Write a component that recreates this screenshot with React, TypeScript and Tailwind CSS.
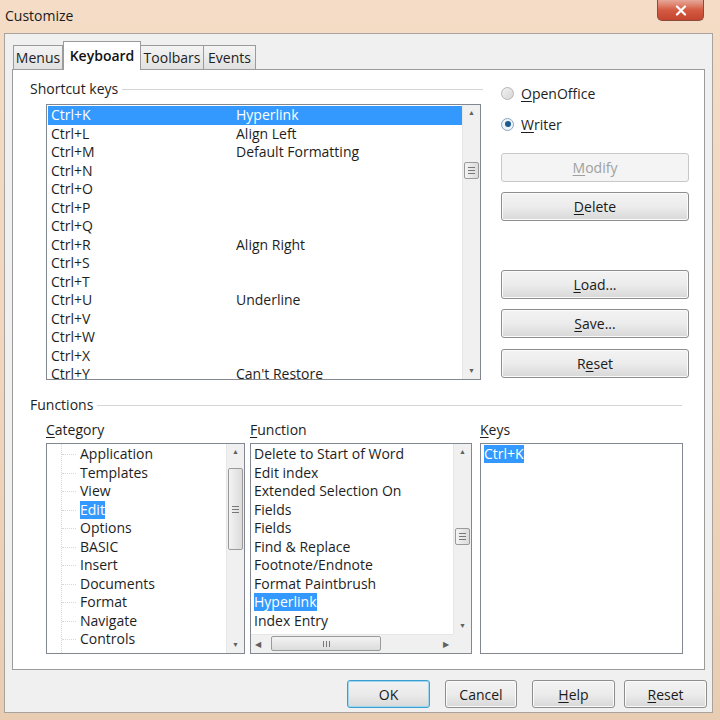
import React from "react";

const font = { fontFamily: '"Open Sans", "Noto Sans", sans-serif' };

function U({ children }: { children: React.ReactNode }) {
  return <span className="underline underline-offset-2">{children}</span>;
}

function Btn({ children, disabled, w = "w-[188px]", h = "h-[29px]", def }: { children: React.ReactNode; disabled?: boolean; w?: string; h?: string; def?: boolean }) {
  return (
    <div
      className={`${w} ${h} shrink-0 flex items-center justify-center rounded-[3px] border text-[14px] ${
        disabled
          ? "border-[#c8c8c8] bg-[#f4f4f4] text-[#a0a0a0]"
          : def
          ? "border-[#3c9fcf] bg-gradient-to-b from-[#f2f2f2] via-[#ebebeb] to-[#d9d9d9] text-[#1a1a1a] shadow-[inset_0_0_0_1px_#9fd6f0]"
          : "border-[#8e8e8e] bg-gradient-to-b from-[#f3f3f3] via-[#ececec] to-[#d8d8d8] text-[#1a1a1a] shadow-[inset_0_0_0_1px_#fbfbfb]"
      }`}
    >
      {children}
    </div>
  );
}

function VScroll({ thumbTop, thumbH }: { thumbTop: number; thumbH: number }) {
  return (
    <div className="relative w-[18px] h-full bg-[#f0f0f0] border-l border-[#e6e6e6]">
      <div className="absolute top-[3px] left-0 w-full flex justify-center text-[7px] text-[#606060]">▲</div>
      <div className="absolute bottom-[3px] left-0 w-full flex justify-center text-[7px] text-[#606060]">▼</div>
      <div
        className="absolute left-[1px] w-[15px] rounded-[2px] border border-[#9a9a9a] bg-gradient-to-r from-[#f3f3f3] to-[#dcdcdc] flex flex-col items-center justify-center gap-[2px]"
        style={{ top: thumbTop, height: thumbH }}
      >
        <div className="w-[7px] h-[1px] bg-[#777]" />
        <div className="w-[7px] h-[1px] bg-[#777]" />
        <div className="w-[7px] h-[1px] bg-[#777]" />
      </div>
    </div>
  );
}

const shortcuts: [string, string][] = [
  ["Ctrl+K", "Hyperlink"],
  ["Ctrl+L", "Align Left"],
  ["Ctrl+M", "Default Formatting"],
  ["Ctrl+N", ""],
  ["Ctrl+O", ""],
  ["Ctrl+P", ""],
  ["Ctrl+Q", ""],
  ["Ctrl+R", "Align Right"],
  ["Ctrl+S", ""],
  ["Ctrl+T", ""],
  ["Ctrl+U", "Underline"],
  ["Ctrl+V", ""],
  ["Ctrl+W", ""],
  ["Ctrl+X", ""],
  ["Ctrl+Y", "Can't Restore"],
];

const categories = ["Application", "Templates", "View", "Edit", "Options", "BASIC", "Insert", "Documents", "Format", "Navigate", "Controls"];
const functions = [
  "Delete to Start of Word",
  "Edit index",
  "Extended Selection On",
  "Fields",
  "Fields",
  "Find & Replace",
  "Footnote/Endnote",
  "Format Paintbrush",
  "Hyperlink",
  "Index Entry",
];

function GroupLabel({ text }: { text: string }) {
  return (
    <div className="flex items-center gap-[4px] h-[18px]">
      <span className="text-[14px] text-[#1e1e1e] whitespace-nowrap">{text}</span>
      <div className="flex-1 h-[1px] bg-[#d5d5d5] mt-[2px]" />
    </div>
  );
}

export default function App() {
  return (
    <div
      className="w-[720px] h-[720px] flex flex-col bg-gradient-to-b from-[#f4dcc6] via-[#f0d6bd] to-[#e9cdb2] overflow-hidden"
      style={font}
    >
      {/* title bar */}
      <div className="relative h-[33px] shrink-0">
        <div className="absolute left-[5px] top-[5px] text-[14px] text-[#1a1a1a]">Customize</div>
        <div className="absolute left-[657px] top-0 w-[47px] h-[21px] rounded-b-[5px] border border-t-0 border-[#8a4a3c] bg-gradient-to-b from-[#e6a898] via-[#d45a42] to-[#c4452e] flex items-center justify-center">
          <svg width="12" height="11" viewBox="0 0 12 11">
            <path d="M2 1.5 L10 9.5 M10 1.5 L2 9.5" stroke="#fff" strokeWidth="2.2" strokeLinecap="round" />
          </svg>
        </div>
      </div>

      {/* client */}
      <div className="ml-[4px] mr-[7px] mb-[7px] flex-1 border border-[#a8a39c] bg-[#f0f0f0] flex flex-col pl-[7px] pr-[7px]">
        {/* tabs */}
        <div className="h-[35px] flex items-end pl-[1px] shrink-0">
          <div className="w-[50px] h-[24px] border border-b-0 border-[#9b9b9b] bg-gradient-to-b from-[#f4f4f4] to-[#e1e1e1] flex items-center justify-center text-[14px] text-[#222]">
            Menus
          </div>
          <div className="relative z-10 -mb-[1px] w-[78px] h-[29px] border border-b-0 border-[#9b9b9b] bg-white flex items-start pt-[3px] justify-center text-[14px] font-semibold text-[#111]">
            Keyboard
          </div>
          <div className="w-[63px] h-[24px] border border-b-0 border-l-0 border-[#9b9b9b] bg-gradient-to-b from-[#f4f4f4] to-[#e1e1e1] flex items-center justify-center text-[14px] text-[#222]">
            Toolbars
          </div>
          <div className="w-[52px] h-[24px] border border-b-0 border-l-0 border-[#9b9b9b] bg-gradient-to-b from-[#f4f4f4] to-[#e1e1e1] flex items-center justify-center text-[14px] text-[#222]">
            Events
          </div>
        </div>

        {/* panel */}
        <div className="h-[601px] shrink-0 border border-[#9b9b9b] bg-white pl-[17px] pr-[13px] pt-[9px] flex flex-col">
          {/* top section */}
          <div className="flex">
            <div className="w-[453px] flex flex-col">
              <GroupLabel text="Shortcut keys" />
              <div className="ml-[16px] mt-[7px] w-[435px] h-[276px] border border-[#828790] flex">
                <div className="flex-1 flex flex-col pl-[1px] pt-[1px] overflow-hidden">
                  {shortcuts.map(([k, f], i) => (
                    <div
                      key={k}
                      className={`h-[18.5px] shrink-0 flex items-center text-[14px] leading-[18px] ${
                        i === 0 ? "bg-[#3399ff] text-white" : "text-[#1e1e1e]"
                      }`}
                    >
                      <span className="w-[188px] pl-[3px]">{k}</span>
                      <span>{f}</span>
                    </div>
                  ))}
                </div>
                <VScroll thumbTop={57} thumbH={17} />
              </div>
            </div>
            <div className="ml-[18px] w-[188px] flex flex-col">
              <div className="h-[18px] flex items-center gap-[7px] mt-[5px]">
                <div className="w-[13px] h-[13px] rounded-full border border-[#b5b5b5] bg-gradient-to-br from-[#f2f2f2] to-[#d6d6d6]" />
                <span className="text-[14px] text-[#1e1e1e]">
                  <U>O</U>penOffice
                </span>
              </div>
              <div className="h-[18px] flex items-center gap-[7px] mt-[13px]">
                <div className="w-[13px] h-[13px] rounded-full border border-[#8ca5bd] bg-[#eef4f9] flex items-center justify-center">
                  <div className="w-[6px] h-[6px] rounded-full bg-[#1d5a8e]" />
                </div>
                <span className="text-[14px] text-[#1e1e1e]">
                  <U>W</U>riter
                </span>
              </div>
              <div className="mt-[20px]">
                <Btn disabled>
                  <U>M</U>odify
                </Btn>
              </div>
              <div className="mt-[10px]">
                <Btn>
                  <U>D</U>elete
                </Btn>
              </div>
              <div className="mt-[49px]">
                <Btn>
                  <U>L</U>oad...
                </Btn>
              </div>
              <div className="mt-[10px]">
                <Btn>
                  <U>S</U>ave...
                </Btn>
              </div>
              <div className="mt-[11px]">
                <Btn>
                  R<U>e</U>set
                </Btn>
              </div>
            </div>
          </div>

          {/* functions */}
          <div className="mt-[15px] mr-[9px]">
            <GroupLabel text="Functions" />
          </div>
          <div className="flex mt-[7px] ml-[16px]">
            {/* category */}
            <div className="w-[199px] flex flex-col">
              <div className="h-[18px] text-[14px] text-[#1e1e1e] flex items-center">
                <span>
                  <U>C</U>ategory
                </span>
              </div>
              <div className="mt-[5px] h-[211px] border border-[#828790] flex">
                <div className="relative flex-1 flex flex-col pt-[1px] overflow-hidden">
                  <div className="absolute left-[14px] top-0 bottom-0 border-l border-dotted border-[#d8d8d8]" />
                  {categories.map((c, i) => (
                    <div key={c} className="relative h-[18.5px] shrink-0 flex items-center text-[14px] leading-[18px]">
                      <div className="absolute left-[15px] w-[14px] top-[9px] border-t border-dotted border-[#d8d8d8]" />
                      <span className={`ml-[33px] ${i === 3 ? "bg-[#3399ff] text-white" : "text-[#1e1e1e]"}`}>{c}</span>
                    </div>
                  ))}
                </div>
                <VScroll thumbTop={24} thumbH={82} />
              </div>
            </div>
            {/* function */}
            <div className="ml-[5px] w-[222px] flex flex-col">
              <div className="h-[18px] text-[14px] text-[#1e1e1e] flex items-center">
                <span>
                  <U>F</U>unction
                </span>
              </div>
              <div className="mt-[5px] h-[211px] border border-[#828790] flex flex-col">
                <div className="flex flex-1 min-h-0">
                  <div className="flex-1 flex flex-col pt-[1px] pl-[3px] overflow-hidden">
                    {functions.map((f, i) => (
                      <div key={i} className="h-[18.5px] shrink-0 flex items-center text-[14px] leading-[18px]">
                        <span className={i === 8 ? "bg-[#3399ff] text-white" : "text-[#1e1e1e]"}>{f}</span>
                      </div>
                    ))}
                  </div>
                  <VScroll thumbTop={84} thumbH={17} />
                </div>
                <div className="h-[19px] flex shrink-0">
                  <div className="relative flex-1 bg-[#f0f0f0] border-t border-[#e6e6e6]">
                    <div className="absolute left-[4px] top-[3px] text-[8px] text-[#606060]">◀</div>
                    <div className="absolute right-[4px] top-[3px] text-[8px] text-[#606060]">▶</div>
                    <div className="absolute left-[20px] top-[1px] w-[110px] h-[15px] rounded-[2px] border border-[#9a9a9a] bg-gradient-to-b from-[#f3f3f3] to-[#dcdcdc] flex items-center justify-center gap-[2px]">
                      <div className="w-[1px] h-[6px] bg-[#777]" />
                      <div className="w-[1px] h-[6px] bg-[#777]" />
                      <div className="w-[1px] h-[6px] bg-[#777]" />
                    </div>
                  </div>
                  <div className="w-[18px] bg-[#f0f0f0]" />
                </div>
              </div>
            </div>
            {/* keys */}
            <div className="ml-[8px] w-[203px] flex flex-col">
              <div className="h-[18px] text-[14px] text-[#1e1e1e] flex items-center">
                <span>
                  <U>K</U>eys
                </span>
              </div>
              <div className="mt-[5px] h-[211px] border border-[#828790] pt-[1px] pl-[3px]">
                <div className="h-[18.5px] flex items-center text-[14px] leading-[18px]">
                  <span className="bg-[#3399ff] text-white">Ctrl+K</span>
                </div>
              </div>
            </div>
          </div>
        </div>

        {/* bottom buttons */}
        <div className="flex-1 flex items-start justify-end pt-[10px] -mr-[2px]">
          <Btn w="w-[83px]" h="h-[28px]" def>
            OK
          </Btn>
          <div className="w-[15px]" />
          <Btn w="w-[72px]" h="h-[28px]">
            Cancel
          </Btn>
          <div className="w-[15px]" />
          <Btn w="w-[83px]" h="h-[28px]">
            <U>H</U>elp
          </Btn>
          <div className="w-[9px]" />
          <Btn w="w-[83px]" h="h-[28px]">
            <U>R</U>eset
          </Btn>
        </div>
      </div>
    </div>
  );
}
